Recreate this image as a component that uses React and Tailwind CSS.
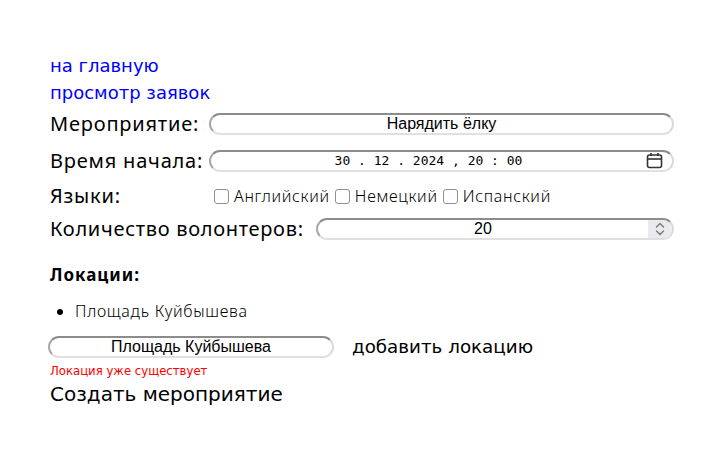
import { ChevronUp, ChevronDown } from "lucide-react";

const field =
  "h-[22px] shrink-0 rounded-full border-2 border-t-[#8c8c8c] border-l-[#a8a8a8] border-b-[#e0e0e0] border-r-[#dadada] bg-white flex items-center";

const Check = ({ label }) => (
  <label className="flex items-center gap-[5px]">
    <span className="w-[15px] h-[15px] rounded-[3px] border border-[#8f8f9d] bg-white" />
    <span>{label}</span>
  </label>
);

const App = () => {
  return (
    <div className="bg-white min-h-[454px] pt-[52px] pl-[50px] text-black font-['Noto_Sans',sans-serif]">
      {/* ссылки */}
      <div className="flex flex-col font-['DejaVu_Sans',sans-serif] text-[18px] leading-[27px] text-[#0000ff]">
        <a href="#">на главную</a>
        <a href="#">просмотр заявок</a>
      </div>

      <div className="flex items-center h-[35px] text-[20px] tracking-[0.8px]">
        <span className="w-[159px] shrink-0">Мероприятие:</span>
        <div className={`${field} w-[465px] justify-center tracking-normal font-['Liberation_Sans',sans-serif] text-[16px]`}>
          Нарядить ёлку
        </div>
      </div>

      <div className="flex items-center h-[39px] text-[20px] tracking-[0.8px]">
        <span className="w-[159px] shrink-0">Время начала:</span>
        <div className={`${field} w-[465px] justify-center pr-[26px] relative tracking-normal font-['DejaVu_Sans_Mono',monospace] text-[13px]`}>
          <span className="whitespace-pre">30 . 12 . 2024 , 20 : 00</span>
          <svg className="absolute right-[9px] w-[17px] h-[17px]" viewBox="0 0 17 17" fill="none" stroke="#333" strokeWidth="1.6">
            <rect x="1.5" y="3" width="14" height="12.5" rx="2" />
            <path d="M1.5 7h14" />
            <path d="M5 1v3M12 1v3" />
          </svg>
        </div>
      </div>

      <div className="flex items-center h-[32px]">
        <span className="w-[164px] shrink-0 text-[20px] tracking-[0.8px]">Языки:</span>
        <div className="flex items-center gap-[5px] text-[16px] font-light tracking-[0.7px]">
          <Check label="Английский" />
          <Check label="Немецкий" />
          <Check label="Испанский" />
        </div>
      </div>

      <div className="flex items-center h-[34px] text-[20px] tracking-[0.7px]">
        <span className="w-[266px] shrink-0">Количество волонтеров:</span>
        <div className={`${field} w-[358px] relative justify-center pr-[24px] tracking-normal font-['Liberation_Sans_Narrow','Liberation_Sans',sans-serif] text-[16px]`}>
          20
          <div className="absolute right-0 top-0 bottom-0 w-[24px] rounded-r-full bg-[#e9e9ee] flex flex-col items-center justify-center text-[#7a7a7a]">
            <svg width="12" height="16" viewBox="0 0 12 16" fill="none" stroke="currentColor" strokeWidth="1.4" strokeLinecap="round" strokeLinejoin="round">
              <path d="M2.5 6l3.5-3.5L9.5 6" />
              <path d="M2.5 10l3.5 3.5L9.5 10" />
            </svg>
          </div>
        </div>
      </div>

      <h3 className="mt-[18px] text-[17px] font-bold leading-[22px] tracking-[1px]">Локации:</h3>
      <ul className="list-disc pl-[25px] mt-[14px] text-[16px] font-light leading-[22px] tracking-[0.7px]">
        <li>Площадь Куйбышева</li>
      </ul>

      <div className="flex items-center mt-[14px] h-[22px] -ml-[2px]">
        <div className={`${field} w-[286px] justify-center font-['Liberation_Sans',sans-serif] text-[16px]`}>
          Площадь Куйбышева
        </div>
        <button className="ml-[18px] text-[18.3px] font-['DejaVu_Sans',sans-serif]">добавить локацию</button>
      </div>
      <div className="mt-[4px] text-[11.7px] leading-[18px] text-[#ff0000] font-['DejaVu_Sans',sans-serif]">
        Локация уже существует
      </div>
      <button className="text-[20px] leading-[28px] font-['DejaVu_Sans',sans-serif]">Создать мероприятие</button>
    </div>
  );
};

export default App;
